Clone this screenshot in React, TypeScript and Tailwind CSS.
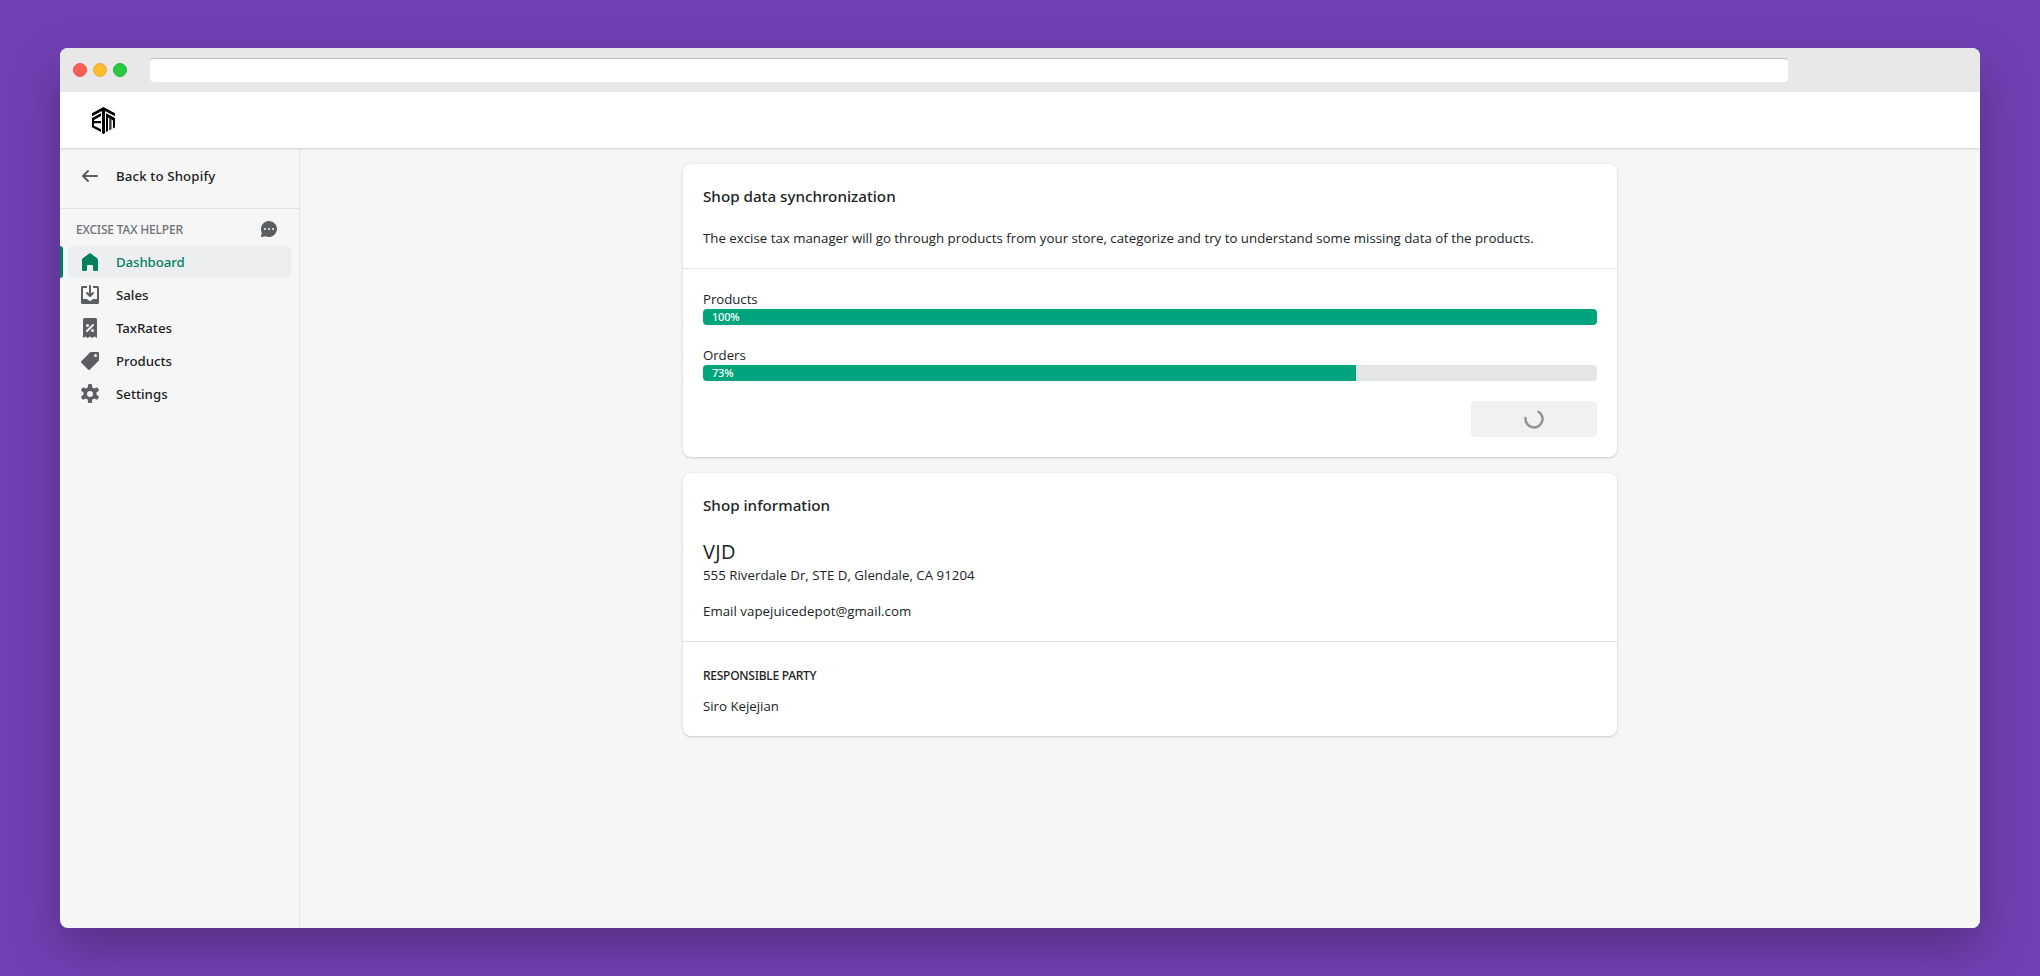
import type { ReactNode } from "react";

type IconProps = { children: ReactNode; className?: string };

function Icon({ children, className = "fill-[#5c5f62]" }: IconProps) {
  return (
    <svg viewBox="0 0 20 20" className={`size-5 shrink-0 ${className}`}>
      {children}
    </svg>
  );
}

function ArrowLeftIcon() {
  return (
    <Icon>
      <path d="M17 9h-11.586l3.293-3.293a.999.999 0 1 0-1.414-1.414l-5 5a.999.999 0 0 0 0 1.414l5 5a.997.997 0 0 0 1.414 0 .999.999 0 0 0 0-1.414l-3.293-3.293h11.586a1 1 0 1 0 0-2z" />
    </Icon>
  );
}

function HomeIcon() {
  return (
    <Icon className="fill-[#008060]">
      <path d="M18 7.7v9.8a1.5 1.5 0 0 1-1.5 1.5h-2a1.5 1.5 0 0 1-1.5-1.5v-3.5a1 1 0 0 0-1-1h-4a1 1 0 0 0-1 1v3.5a1.5 1.5 0 0 1-1.5 1.5h-2a1.5 1.5 0 0 1-1.5-1.5v-9.8a1.5 1.5 0 0 1 .62-1.21l6.5-4.9a1.5 1.5 0 0 1 1.76 0l6.5 4.9a1.5 1.5 0 0 1 .62 1.21z" />
    </Icon>
  );
}

function SalesIcon() {
  return (
    <Icon>
      <path d="M11 1a1 1 0 1 0-2 0v7.586l-1.293-1.293a1 1 0 0 0-1.414 1.414l3 3a1 1 0 0 0 1.414 0l3-3a1 1 0 0 0-1.414-1.414l-1.293 1.293v-7.586z" />
      <path d="M3 14v-11h4v-2h-4.5a1.5 1.5 0 0 0-1.5 1.5v15a1.5 1.5 0 0 0 1.5 1.5h15a1.5 1.5 0 0 0 1.5-1.5v-15a1.5 1.5 0 0 0-1.5-1.5h-4.5v2h4v11h-3.5c-.775 0-1.388.662-1.926 1.244l-.11.12a1.994 1.994 0 0 1-1.463.636 1.994 1.994 0 0 1-1.463-.637l-.111-.12c-.538-.58-1.151-1.243-1.927-1.243h-3.5z" />
    </Icon>
  );
}

function TaxIcon() {
  return (
    <Icon>
      <path
        fillRule="evenodd"
        d="M4.500 0a1.500 1.500 0 0 0-1.500 1.500v18.500l2.333-1.600 2.334 1.600 2.333-1.600 2.333 1.600 2.334-1.600 2.333 1.600v-18.500a1.500 1.500 0 0 0-1.500-1.500h-11zm9.207 7.707a1 1 0 0 0-1.414-1.414l-6 6a1 1 0 1 0 1.414 1.414l6-6zm-4.707-.207a1.500 1.500 0 1 1-3 0 1.500 1.500 0 0 1 3 0zm3.500 6.500a1.500 1.500 0 1 0 0-3 1.500 1.500 0 0 0 0 3z"
      />
    </Icon>
  );
}

function TagIcon() {
  return (
    <Icon>
      <path
        fillRule="evenodd"
        d="M10.293 1.293a1 1 0 0 1 .707-.293h7a1 1 0 0 1 1 1v7a1 1 0 0 1-.293.707l-9 9a1 1 0 0 1-1.414 0l-7-7a1 1 0 0 1 0-1.414l9-9zm5.207 4.707a1.500 1.500 0 1 0 0-3 1.500 1.500 0 0 0 0 3z"
      />
    </Icon>
  );
}

function GearIcon() {
  return (
    <Icon>
      <path
        fillRule="evenodd"
        d="M9.027 0a1 1 0 0 0-.99.859l-.37 2.598a6.993 6.993 0 0 0-1.742 1.010l-2.437-.980a1 1 0 0 0-1.239.428l-.973 1.685a1 1 0 0 0 .248 1.287l2.066 1.621a7.060 7.060 0 0 0 0 2.013l-2.065 1.622a1 1 0 0 0-.248 1.287l.972 1.685a1 1 0 0 0 1.240.428l2.435-.979a7.020 7.020 0 0 0 1.743 1.009l.370 2.598a1 1 0 0 0 .990.859h1.946a1 1 0 0 0 .990-.859l.370-2.598a6.989 6.989 0 0 0 1.742-1.009l2.437.979a1 1 0 0 0 1.240-.428l.972-1.685a1 1 0 0 0-.249-1.287l-2.065-1.621a7.037 7.037 0 0 0 0-2.014l2.065-1.621a1 1 0 0 0 .249-1.287l-.972-1.685a1 1 0 0 0-1.240-.428l-2.436.979a7.050 7.050 0 0 0-1.743-1.009l-.370-2.598a1 1 0 0 0-.990-.859h-1.946zm.973 13a3 3 0 1 0 0-6 3 3 0 0 0 0 6z"
      />
    </Icon>
  );
}

function ChatIcon() {
  return (
    <svg viewBox="0 0 16 16" className="size-4 fill-[#5c5f62]">
      <path
        fillRule="evenodd"
        d="M8 0a8 8 0 1 1-3.500 15.200l-3.700.780a.7.7 0 0 1-.800-.880l.780-3.600a8 8 0 0 1 7.220-11.500zm-4 9a1 1 0 1 0 0-2 1 1 0 0 0 0 2zm4 0a1 1 0 1 0 0-2 1 1 0 0 0 0 2zm5-1a1 1 0 1 1-2 0 1 1 0 0 1 2 0z"
      />
    </svg>
  );
}

function Logo() {
  return (
    <svg viewBox="0 0 23 27" className="h-[27px] w-[23px] fill-black">
      <path d="M11.500 0 23 6.200v3L11.500 3.200 0 9.200v-3z" />
      <path d="M10 2h3v24.300l-1.500.7-1.500-.7z" />
      <path d="M9 6.200v2.900l-7 3.900v1.100h7v2.100H2v2.600l7 3.500v2.700L0 20.300v-9.200z" />
      <path d="m14 6.200 9 4.900v9.200l-2 1.100v-8L16 10.600v13.300l-2 1.100z" />
      <path className="fill-[#333]" d="m17.200 10.500 2.300 1.300v10.500l-2.300 1.200z" />
    </svg>
  );
}

type NavItem = { label: string; icon: ReactNode; tracking: string; active?: boolean };

const NAV: NavItem[] = [
  { label: "Dashboard", icon: <HomeIcon />, tracking: "tracking-[-0.1px]", active: true },
  { label: "Sales", icon: <SalesIcon />, tracking: "tracking-normal" },
  { label: "TaxRates", icon: <TaxIcon />, tracking: "tracking-[-0.05px]" },
  { label: "Products", icon: <TagIcon />, tracking: "tracking-normal" },
  { label: "Settings", icon: <GearIcon />, tracking: "tracking-normal" },
];

function Sidebar() {
  return (
    <nav className="w-60 shrink-0 border-r border-[#e1e3e5] font-['Noto_Sans',sans-serif] text-[13.25px] leading-5 font-medium text-[#202223]">
      <a className="flex h-[61px] items-start gap-4 border-b border-[#e1e3e5] pt-[18px] pl-5 tracking-[0.13px]">
        <ArrowLeftIcon />
        <span>Back to Shopify</span>
      </a>
      <div className="flex h-[37px] items-center justify-between pt-[3px] pr-[22px] pl-4">
        <h2 className="pt-0.5 text-xs leading-4 tracking-[-0.18px] text-[#6d7175]">EXCISE TAX HELPER</h2>
        <ChatIcon />
      </div>
      <ul className="flex flex-col gap-px">
        {NAV.map((item) => (
          <li key={item.label} className="flex h-8">
            <span className={`w-[3px] rounded-r ${item.active ? "bg-[#008060]" : ""}`} />
            <a
              className={`ml-[5px] flex w-[223px] items-center gap-4 rounded pl-3 ${item.tracking} ${
                item.active ? "bg-[#edeeef] text-[#008060]" : ""
              }`}
            >
              {item.icon}
              <span>{item.label}</span>
            </a>
          </li>
        ))}
      </ul>
    </nav>
  );
}

function Progress({ label, value }: { label: string; value: number }) {
  return (
    <div>
      <p className="leading-5 tracking-[-0.05px]">{label}</p>
      <div className="h-4 overflow-hidden rounded bg-[#e4e5e7]">
        <div
          className="h-full bg-[#00a47c] pl-[9px] font-['Noto_Sans',sans-serif] text-[11px] leading-4 font-medium tracking-[-0.2px] text-white"
          style={{ width: `${value}%` }}
        >
          {value}%
        </div>
      </div>
    </div>
  );
}

function Card({ children }: { children: ReactNode }) {
  return (
    <section className="rounded-lg bg-white shadow-[0_0_5px_rgba(23,24,24,0.05),0_1px_2px_rgba(0,0,0,0.15)]">
      {children}
    </section>
  );
}

function CardTitle({ children }: { children: ReactNode }) {
  return <h2 className="font-['Noto_Sans',sans-serif] text-[15.2px] leading-6 font-medium">{children}</h2>;
}

function SyncCard() {
  return (
    <Card>
      <div className="h-[105px] border-b border-[#e1e3e5] px-5 pt-5">
        <CardTitle>Shop data synchronization</CardTitle>
        <p className="pt-5 tracking-[0.012px] whitespace-nowrap">
          The excise tax manager will go through products from your store, categorize and try to understand some missing
          data of the products.
        </p>
      </div>
      <div className="flex flex-col gap-5 p-5">
        <Progress label="Products" value={100} />
        <Progress label="Orders" value={73} />
        <button className="flex h-9 w-[126px] items-center justify-center self-end rounded bg-[#f1f1f1]">
          <svg viewBox="0 0 20 20" className="size-5 fill-none stroke-[#8c9196] stroke-[2.4]">
            <path strokeLinecap="round" d="M14.500 2.700A8.500 8.500 0 1 1 1.550 9" />
          </svg>
        </button>
      </div>
    </Card>
  );
}

function ShopCard() {
  return (
    <Card>
      <div className="h-[169px] border-b border-[#e1e3e5] px-5 pt-5">
        <CardTitle>Shop information</CardTitle>
        <p className="pt-[21px] text-xl leading-7 tracking-[0.4px]">VJD</p>
        <p className="-mt-px tracking-[0.03px]">555 Riverdale Dr, STE D, Glendale, CA 91204</p>
        <p className="pt-4 tracking-[0.04px]">Email vapejuicedepot@gmail.com</p>
      </div>
      <div className="h-[94px] px-5 pt-[26px]">
        <h3 className="font-['Noto_Sans',sans-serif] text-xs leading-4 font-medium tracking-[-0.26px]">
          RESPONSIBLE PARTY
        </h3>
        <p className="pt-3">Siro Kejejian</p>
      </div>
    </Card>
  );
}

export default function App() {
  return (
    <div className="h-[976px] w-[2040px] overflow-hidden bg-[#7141b3] px-[60px] py-12">
      <div className="flex h-[880px] flex-col overflow-hidden rounded-lg bg-[#f6f6f7] shadow-[0_20px_52px_rgba(0,0,0,0.28)]">
        <div className="flex h-11 shrink-0 items-center bg-[#e8e8e8] pl-[13px]">
          <div className="flex gap-1.5">
            <span className="size-3.5 rounded-full border border-[#e8514a] bg-[#ff5f57]" />
            <span className="size-3.5 rounded-full border border-[#e5a93a] bg-[#febc2e]" />
            <span className="size-3.5 rounded-full border border-[#24ae3b] bg-[#28c840]" />
          </div>
          <div className="ml-[23px] h-6 w-[1638px] rounded border-t border-[#bdbdbd] bg-white" />
        </div>
        <header className="z-10 flex h-14 shrink-0 items-center bg-white pt-px pl-8 shadow-[0_2px_2px_-1px_rgba(0,0,0,0.17)]">
          <Logo />
        </header>
        <div className="flex grow">
          <Sidebar />
          <main className="flex grow justify-center bg-[#f6f6f6] pt-4">
            <div className="ml-5 flex w-[934px] flex-col gap-4 font-['Open_Sans',sans-serif] text-[13.25px] leading-5 text-[#202223]">
              <SyncCard />
              <ShopCard />
            </div>
          </main>
        </div>
      </div>
    </div>
  );
}
